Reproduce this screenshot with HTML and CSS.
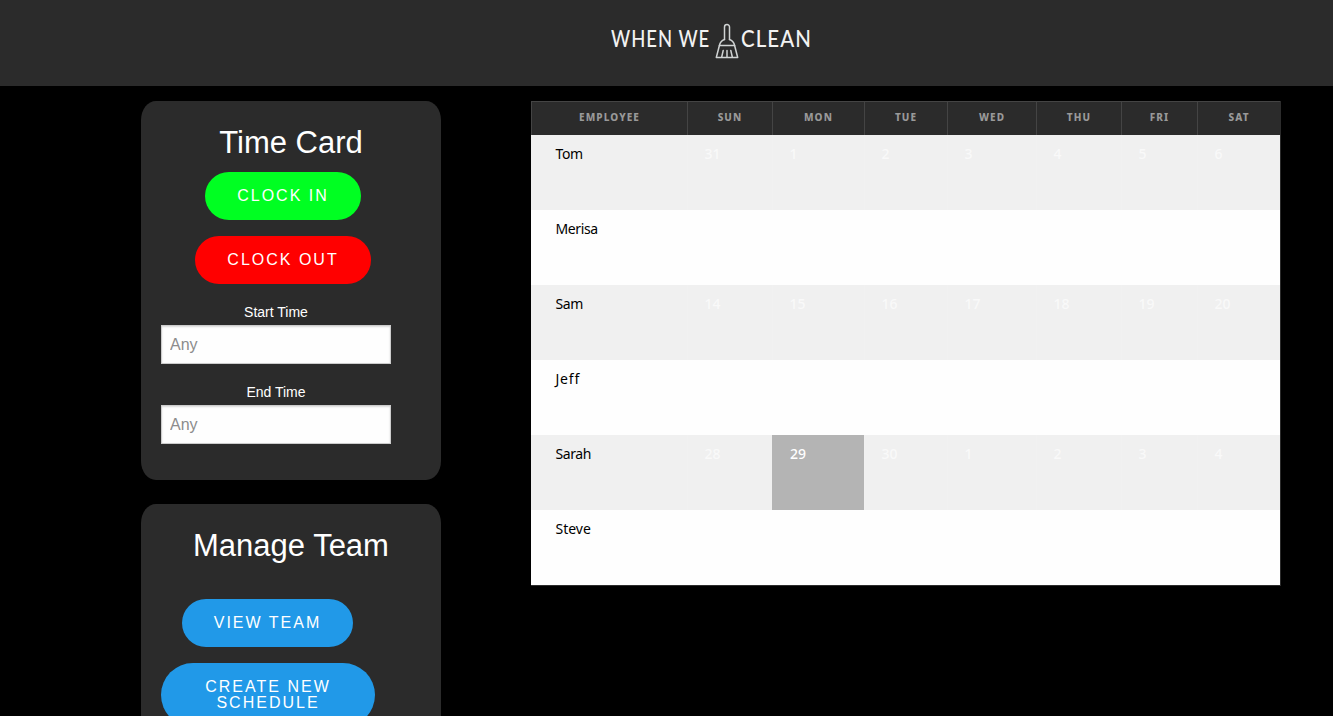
FILE: index.html
```html
<!DOCTYPE html>
<html lang="en">
<head>
<meta charset="utf-8">
<title>When We Clean</title>
<link rel="stylesheet" href="styles.css">
</head>
<body>
<header class="topbar">
  <div class="logo">
    <span class="logo-when">WHEN WE</span>
    <svg class="logo-broom" width="26" height="38" viewBox="0 0 26 38" fill="none" stroke="#d0d3d3" stroke-width="1.5" stroke-linejoin="round" stroke-linecap="round">
      <path d="M10.500 17.500V5a2.500 2.500 0 0 1 5 0v12.500"/>
      <path d="M10.500 17.500C7.500 18.500 6 20.500 5.400 23.500H20.600C20 20.500 18.500 18.500 15.500 17.500"/>
      <path d="M5.400 23.500L2.300 35.500H23.700L20.600 23.500M9.200 28.500L7.700 35M13 28.500V35M16.800 28.500L18.300 35"/>
    </svg>
    <span class="logo-clean">CLEAN</span>
  </div>
</header>
<main class="page">
  <aside class="sidebar">
    <section class="card">
      <h2 class="card-title">Time Card</h2>
      <div class="actions actions-time">
        <button class="btn btn-in">CLOCK IN</button>
        <button class="btn btn-out">CLOCK OUT</button>
      </div>
      <div class="fields">
        <label class="label" for="start">Start Time</label>
        <input class="input" id="start" placeholder="Any">
        <label class="label" for="end">End Time</label>
        <input class="input" id="end" placeholder="Any">
      </div>
    </section>
    <section class="card card-team">
      <h2 class="card-title">Manage Team</h2>
      <div class="actions actions-team">
        <button class="btn btn-view">VIEW TEAM</button>
        <button class="btn btn-wide">CREATE NEW SCHEDULE</button>
      </div>
    </section>
  </aside>
  <div class="schedule">
    <div class="row head"><span>EMPLOYEE</span><span>SUN</span><span>MON</span><span>TUE</span><span>WED</span><span>THU</span><span>FRI</span><span>SAT</span></div>
    <div class="row shaded"><b class="name">Tom</b><span>31</span><span>1</span><span>2</span><span>3</span><span>4</span><span>5</span><span>6</span></div>
    <div class="row"><b class="name">Merisa</b></div>
    <div class="row shaded"><b class="name">Sam</b><span>14</span><span>15</span><span>16</span><span>17</span><span>18</span><span>19</span><span>20</span></div>
    <div class="row"><b class="name name-loose">Jeff</b></div>
    <div class="row shaded"><b class="name">Sarah</b><span>28</span><span class="today">29</span><span>30</span><span>1</span><span>2</span><span>3</span><span>4</span></div>
    <div class="row"><b class="name name-even">Steve</b></div>
  </div>
</main>
</body>
</html>
```
FILE: styles.css
```css
* { box-sizing: border-box; }
html, body { height: 100%; }
body {
  margin: 0;
  background: #000;
  color: #fff;
  font-family: "Liberation Sans", Arial, sans-serif;
  overflow: hidden;
}
.topbar {
  height: 86px;
  background: #2b2b2b;
  padding: 22px 0 0 611px;
}
.logo {
  display: flex;
  height: 38px;
  color: #f2f2f2;
  font: 500 22.5px/34px Lato, sans-serif;
  white-space: nowrap;
}
.logo-when { width: 103px; letter-spacing: 1.2px; transform: scaleX(0.82); transform-origin: left; }
.logo-broom { flex: none; }
.logo-clean { padding-left: 1px; letter-spacing: 1.2px; transform: scaleX(0.91); transform-origin: left; }
.page {
  display: flex;
  align-items: flex-start;
  gap: 90px;
  height: calc(100% - 86px);
  padding: 15px 0 0 141px;
  overflow: hidden;
}
.sidebar { width: 300px; }
.card {
  height: 379px;
  margin-bottom: 24px;
  padding: 20px 20px 0;
  border-radius: 5%;
  background: #2b2b2b;
}
.card-title {
  margin: 0;
  font-size: 31px;
  font-weight: 400;
  line-height: 43px;
  text-align: center;
}
.actions {
  display: flex;
  flex-direction: column;
  align-items: center;
  gap: 16px;
}
.actions-time { width: 244px; padding-top: 8px; }
.actions-team { width: 214px; padding-top: 32px; }
.btn {
  min-height: 48px;
  padding: 16px 32px;
  border: 0;
  border-radius: 32px;
  background: #2199e8;
  color: #fff;
  font: 16px/16px "Liberation Sans", Arial, sans-serif;
  letter-spacing: 2px;
}
.btn-in { background: #00ff22; }
.btn-out { background: #f00; }
.btn-view { width: 171px; margin-right: 1px; padding: 16px 0; }
.btn-wide { width: 214px; height: 64px; }
.fields { width: 230px; padding-top: 16px; }
.label {
  display: block;
  font-size: 14px;
  line-height: 25px;
  text-align: center;
}
.input {
  display: block;
  width: 230px;
  height: 39px;
  margin: 0 0 16px;
  padding: 8px;
  border: 1px solid #ccc;
  border-radius: 0;
  background: #fefefe;
  box-shadow: inset 0 1px 2px rgba(10, 10, 10, 0.15);
  font: 16px "Liberation Sans", Arial, sans-serif;
}
.input::placeholder { color: #8c8c8c; }
.schedule {
  width: 750px;
  border-right: 1px solid #2c2c2c;
  border-bottom: 1px solid #2c2c2c;
  font-family: "Noto Sans", "Open Sans", sans-serif;
}
.row {
  display: grid;
  grid-template-columns: 156px 85px 92px 83px 89px 85px 76px 83px;
  height: 75px;
  background: #fefefe;
  color: #f9f9f9;
  font-size: 14px;
  line-height: 20px;
}
.row.shaded { background: #f0f0f0; }
.row > span { padding: 9px 0 0 16.5px; border-left: 1px solid #f1f1f1; font-weight: 500; }
.row > .name { padding: 9px 0 0 24.5px; color: #000; font-weight: 400; letter-spacing: -0.4px; }
.row > .name-loose { letter-spacing: 0.8px; }
.row > .name-even { letter-spacing: 0; }
.row > .today { padding-left: 17px; background: #b4b4b4; border-color: #b4b4b4; color: #fff; }
.row.head { height: 34px; background: #2b2b2b; border-top: 1px solid #444; }
.row.head > span {
  padding: 0;
  border-left: 1px solid #444;
  color: #999;
  font-size: 10px;
  font-weight: 800;
  line-height: 31px;
  letter-spacing: 1.1px;
  text-align: center;
}
```
